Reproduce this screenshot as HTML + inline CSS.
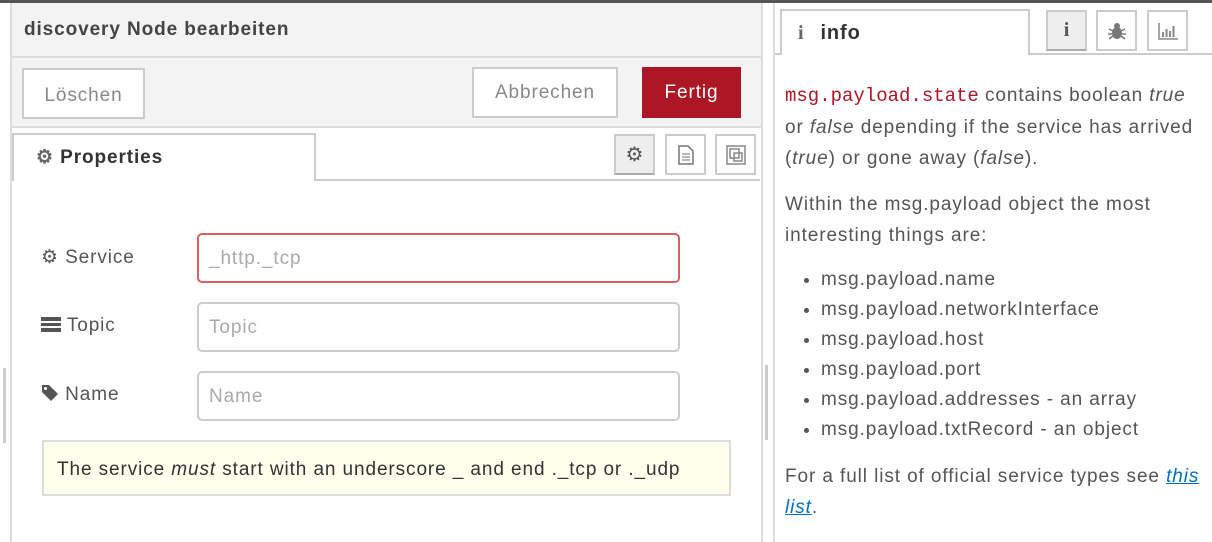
<!DOCTYPE html>
<html><head><meta charset="utf-8"><style>
*{box-sizing:border-box}
body{margin:0;width:1212px;height:542px;overflow:hidden;background:#fff;font-family:"Liberation Sans",sans-serif;color:#555;position:relative;letter-spacing:0.9px}
.a{position:absolute}
.btn{position:absolute;background:#fff;border:2px solid #ccc;font-size:19px;color:#888;display:flex;align-items:center;justify-content:center}
.inp{position:absolute;left:197px;width:483px;height:50px;border:2px solid #ccc;border-radius:5px;background:#fff;font-size:19px;color:#aaa;padding:13px 0 0 10px}
.lbl{position:absolute;left:41px;font-size:19px;color:#555}
.ib{position:absolute;width:41px;height:41px;border:2px solid #ccc;background:#fff;display:flex;align-items:center;justify-content:center;letter-spacing:0}
.r p{margin:0}
code{font-family:"Liberation Mono",monospace;color:#ad1625;letter-spacing:0}
li{line-height:30px}
</style></head><body>
<div class="a" style="left:0;top:0;width:1212px;height:3px;background:#555"></div>
<div class="a" style="left:10px;top:3px;width:753px;height:124px;background:#f3f3f3;border-left:2px solid #ddd;border-right:2px solid #ddd"></div>
<div class="a" style="left:10px;top:127px;width:753px;height:415px;border-left:2px solid #ddd;border-right:2px solid #ddd"></div>
<div class="a" style="left:24px;top:19px;font-size:19px;font-weight:bold;color:#444">discovery Node bearbeiten</div>
<div class="a" style="left:12px;top:56px;width:749px;height:2px;background:#ddd"></div>
<div class="a" style="left:12px;top:126px;width:749px;height:2px;background:#ddd"></div>
<div class="btn" style="left:22px;top:68px;width:123px;height:51px;padding-top:4px">Löschen</div>
<div class="btn" style="left:472px;top:67px;width:146px;height:51px">Abbrechen</div>
<div class="btn" style="left:642px;top:67px;width:99px;height:51px;background:#ad1625;border-color:#ad1625;color:#fff">Fertig</div>
<div class="a" style="left:12px;top:179px;width:748px;height:2px;background:#ccc"></div>
<div class="a" style="left:12px;top:133px;width:304px;height:48px;border:2px solid #ccc;border-bottom:none;background:#fff;font-size:19px;font-weight:bold;color:#333;padding:11px 0 0 22px"><span style="color:#666">⚙</span> Properties</div>
<div class="ib" style="left:614px;top:134px;background:#eee;border-bottom-color:#aaa;font-size:20px;color:#555">⚙</div>
<div class="ib" style="left:665px;top:134px"><svg width="16" height="20" viewBox="0 0 16 20"><path d="M1 1h9l5 5v13H1z" fill="none" stroke="#777" stroke-width="1.5"/><path d="M4 9h8M4 12h8M4 15h8" stroke="#777"/></svg></div>
<div class="ib" style="left:715px;top:134px"><svg width="22" height="22" viewBox="0 0 22 22"><rect x="2" y="2" width="18" height="18" fill="none" stroke="#888" stroke-width="1.5"/><rect x="5" y="5" width="9" height="9" fill="none" stroke="#888" stroke-width="1.5"/><rect x="9" y="9" width="8" height="8" fill="none" stroke="#888" stroke-width="1.5"/></svg></div>
<div class="lbl" style="top:246px">⚙ Service</div>
<div class="lbl" style="top:315px"><span style="display:inline-block;width:20px;height:15px;background:linear-gradient(#555 0 4px,#fff 4px 6px,#555 6px 9px,#fff 9px 11px,#555 11px);vertical-align:-1px"></span> Topic</div>
<div class="lbl" style="top:384px"><svg width="18" height="18" viewBox="0 0 18 18" style="vertical-align:-2px"><path d="M1 1h7l9 9-7 7-9-9z" fill="#555"/><circle cx="4.5" cy="4.5" r="1.5" fill="#fff"/></svg> Name</div>
<div class="inp" style="top:233px;border-color:#d6615f">_http._tcp</div>
<div class="inp" style="top:302px">Topic</div>
<div class="inp" style="top:371px">Name</div>
<div class="a" style="left:42px;top:440px;width:689px;height:56px;background:#ffffee;border:2px solid #ddd;font-size:19px;color:#333;padding:17px 0 0 13px">The service <i>must</i> start with an underscore _ and end ._tcp or ._udp</div>
<div class="a" style="left:3px;top:368px;width:3px;height:75px;background:#ccc"></div>
<div class="a" style="left:765px;top:365px;width:3px;height:75px;background:#ccc"></div>
<div class="a" style="left:773px;top:3px;width:2px;height:539px;background:#ddd"></div>
<div class="a" style="left:775px;top:53px;width:437px;height:2px;background:#ccc"></div>
<div class="a" style="left:780px;top:9px;width:250px;height:46px;border:2px solid #ccc;border-bottom:none;background:#fff;font-size:20px;font-weight:bold;color:#333;padding:11px 0 0 16px"><span style="font-family:'Liberation Serif',serif;color:#666;margin-right:16px">i</span>info</div>
<div class="ib" style="left:1046px;top:10px;background:#eee;border-bottom-color:#aaa;font-family:'Liberation Serif',serif;font-weight:bold;font-size:20px;color:#555">i</div>
<div class="ib" style="left:1096px;top:10px"><svg width="20" height="20" viewBox="0 0 20 20"><ellipse cx="10" cy="12" rx="5" ry="6" fill="#777"/><circle cx="10" cy="5" r="3" fill="#777"/><path d="M2 8l4 2M18 8l-4 2M1 13h4M19 13h-4M2 18l4-3M18 18l-4-3" stroke="#777" stroke-width="1.5"/></svg></div>
<div class="ib" style="left:1147px;top:10px"><svg width="22" height="20" viewBox="0 0 22 20"><path d="M2 2v16h19" fill="none" stroke="#888" stroke-width="1.5"/><path d="M6 16V11M9.5 16V8M13 16V10M16.5 16V5" stroke="#888" stroke-width="2"/></svg></div>
<div class="a r" style="left:785px;top:80px;width:422px;font-size:19px;line-height:31px;color:#555">
<p><code>msg.payload.state</code> contains boolean <i>true</i> or <i>false</i> depending if the service has arrived (<i>true</i>) or gone away (<i>false</i>).</p>
<p style="margin-top:15px">Within the msg.payload object the most interesting things are:</p>
<ul style="margin:14px 0 0;padding-left:36px">
<li>msg.payload.name</li><li>msg.payload.networkInterface</li><li>msg.payload.host</li><li>msg.payload.port</li><li>msg.payload.addresses - an array</li><li>msg.payload.txtRecord - an object</li></ul>
<p style="margin-top:16px">For a full list of official service types see <a style="color:#0070c0;font-style:italic;text-decoration:underline">this list</a>.</p>
</div>
</body></html>
